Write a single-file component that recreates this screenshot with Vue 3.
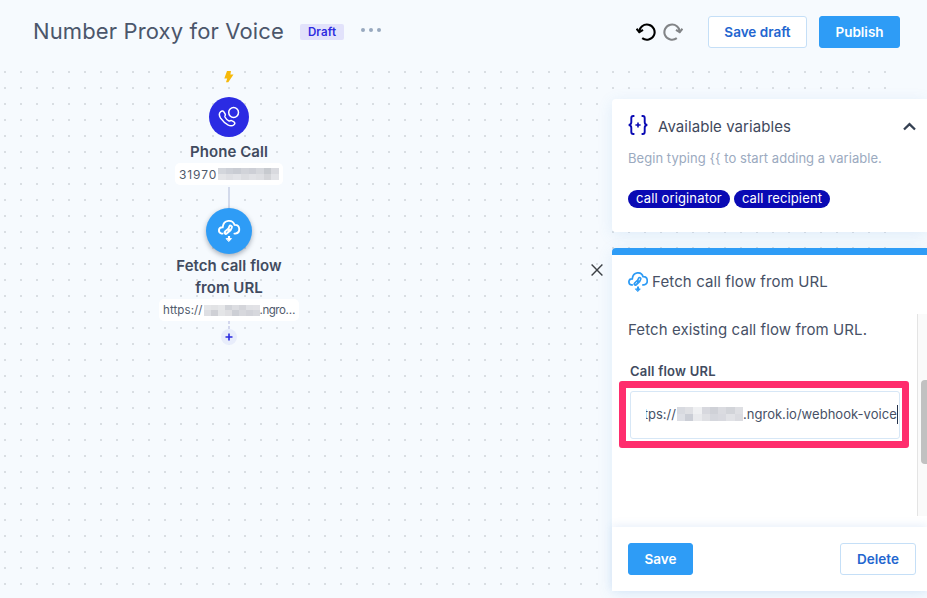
<script setup>
const callDigits = ['#d3d6dc', '#cdd0d7', '#c9ccd3', '#d1d3d9', '#cdcfd6', '#d5d7dc', '#c7cacf', '#d9dadf', '#e4e5e8', '#dfe0e4', '#e3e4e8', '#dcdde1', '#e1e2e6', '#dedfe3', '#d4d5d9', '#e2e3e7']
const hostBlocks = ['#e5e6e8', '#e2e3e5', '#e6e7e9', '#d2d4d9', '#dcdde1', '#d4d5da', '#e0e1e5', '#e2e2e6', '#dedfe3', '#cfd0d5', '#e4e5e7', '#dfdfe2', '#cdcfd5', '#d7d8dd', '#d2d3d9', '#d7d8dd']
const fieldBlocks = ['#d8dae0', '#dfe0e4', '#eff0f2', '#d7d8de', '#cfd1d7', '#dadbe0', '#d2d4d9', '#dedfe3', '#dddfe5', '#cbced6', '#e9eaed', '#dfe0e4', '#d5d7dd', '#d8d9df', '#e1e2e6', '#dadbe0']
const variables = ['call originator', 'call recipient']
</script>

<template>
  <div class="app">
    <header class="topbar">
      <h1 class="title">Number Proxy for Voice</h1>
      <span class="badge">Draft</span>
      <span class="more"><i></i><i></i><i></i></span>
      <div class="history">
        <svg width="20" height="18" viewBox="0 0 20 18" fill="none" stroke="#000" stroke-width="2.1">
          <path d="M3.2 9.2A7.7 7.6 0 1 1 6.2 15.2" /><path d="M.5 5.8l2.8 3.3 3.7-2.3" />
        </svg>
        <svg width="20" height="18" viewBox="0 0 20 18" fill="none" stroke="#828487" stroke-width="2.1">
          <path d="M16.8 9.2A7.7 7.6 0 1 0 13.8 15.2" /><path d="M19.5 5.8l-2.8 3.3-3.7-2.3" />
        </svg>
      </div>
      <button class="btn outline draft">Save draft</button>
      <button class="btn solid publish">Publish</button>
    </header>

    <main class="workspace">
      <section class="flow">
        <svg class="bolt" width="10" height="12" viewBox="0 0 10 12"><path d="M3 .1h4L6.4 3.6h3.1L4.3 11.2H2L3.2 7.4H.3z" fill="#f6b90b" /></svg>
        <div class="node phone">
          <svg width="22" height="22" viewBox="0 0 22 22" fill="none" stroke="#fff" stroke-width="1.5" stroke-linejoin="round">
            <circle cx="15.6" cy="6.5" r="4.9" />
            <path d="M2.6 5.8c1.5-1.4 2.7-.9 3.6.6l1 1.8c.6 1.2-.7 1.8-.2 2.8.9 1.7 2.2 3.1 3.8 3.9 1 .5 1.7-.8 2.8-.3l2 1c1.4.9 1.7 2 .4 3.1-1.4 1.3-3.7 1.5-6.1.2-3.3-1.9-5.4-4.2-7.3-6.8-1.6-2.5-1.6-4.8 0-6.3z" />
          </svg>
        </div>
        <div class="label phone-label">Phone Call</div>
        <div class="chip number"><span class="num">31970</span><span class="mosaic m-call"><i v-for="(c, i) in callDigits" :key="i" :style="{ background: c }"></i></span></div>
        <div class="line"></div>
        <div class="node fetch">
          <svg width="24" height="24" viewBox="0 0 24 24" fill="none" stroke="#fff" stroke-width="1.9" stroke-linecap="round">
            <path d="M5.6 14.6H4.6C.7 13.6 1.1 7.9 5.7 8.2 6.6.2 15.6.2 17.6 5.9c5.6-.3 6.5 7.6.8 8.7h-1" />
            <path d="M13.6 8l-1.2 2.6-3.5 3" stroke-width="4.6" stroke-linejoin="round" /><path d="M13.5 8.1l-.4 1.3M10.3 12.3l-1 .8" stroke="#2e9cf6" stroke-width="1" />
            <path d="M12 17v4" stroke-width="2.2" stroke-linecap="butt" /><path d="M9.5 19.6h5L12 22.3z" fill="#fff" stroke-width="1" stroke-linejoin="round" />
          </svg>
        </div>
        <div class="label fetch-label"><span>Fetch call flow</span><br><span class="from">from URL</span></div>
        <div class="chip url"><span>https://</span><span class="mosaic m-host"><i v-for="(c, i) in hostBlocks" :key="i" :style="{ background: c }"></i></span><span class="domain">.ngro…</span></div>
        <div class="stub"></div>
        <div class="add"><svg width="8" height="8" viewBox="0 0 8 8" stroke="#2b2be0" stroke-width="1.6"><path d="M4 .5v7M.5 4h7" /></svg></div>
      </section>

      <div class="close">
        <svg width="12" height="12" viewBox="0 0 12 12" stroke="#3d4145" stroke-width="1.4"><path d="M.6.6l10.8 10.8M11.4.6L.6 11.4" /></svg>
      </div>

      <aside class="side">
        <section class="card variables">
          <div class="vars-head">
            <svg class="braces" width="20" height="20" viewBox="0 0 20 20" fill="none" stroke="#0a0ab4" stroke-width="1.9">
              <path d="M6.4 1H5.2Q3.3 1 3.3 3v4.3Q3.3 9.5.8 10q2.5.5 2.5 2.7V17q0 2 1.9 2h1.2M13.6 1h1.2q1.9 0 1.9 2v4.3q0 2.2 2.5 2.7-2.5.5-2.5 2.7V17q0 2-1.9 2h-1.2" />
              <path d="M10 7.4v5.2M7.4 10h5.2" stroke-width="1.6" />
            </svg>
            <h2>Available variables</h2>
            <svg class="chev" width="13" height="9" viewBox="0 0 13 9" fill="none" stroke="#354052" stroke-width="2.3"><path d="M1 7.5l5.5-5.4L12 7.5" /></svg>
          </div>
          <p class="hint">Begin typing &#123;&#123; to start adding a variable.</p>
          <div class="tags"><span v-for="v in variables" :key="v" class="tag">{{ v }}</span></div>
        </section>

        <section class="card editor">
          <div class="editor-head">
            <svg width="20" height="20" viewBox="1 1 22 22" fill="none" stroke="#2d9bf5" stroke-width="1.9" stroke-linecap="round">
              <path d="M5.6 15.2H4.6C.9 14.2 1.1 8.2 5.7 8.5 6.6.2 15.6.2 17.6 6.2c5.6-.3 6.3 7.9.8 9h-1" />
              <path d="M13.8 8.4l-1.2 2.6-3.5 3.2" stroke-width="4.4" stroke-linejoin="round" /><path d="M13.7 8.5l-.4 1.3M10.5 12.7l-1 .9" stroke="#fff" stroke-width="1" />
              <path d="M12 17v4" stroke-width="2.2" stroke-linecap="butt" /><path d="M9.5 19.6h5L12 22.3z" fill="#2d9bf5" stroke-width="1" stroke-linejoin="round" />
            </svg>
            <span>Fetch call flow from URL</span>
          </div>
          <div class="scroll">
            <div class="content">
              <p class="desc">Fetch existing call flow from URL.</p>
              <label class="field-label">Call flow URL</label>
              <div class="highlight">
                <div class="input">
                  <span class="clip"><span>t</span></span><span class="proto">ps://</span><span class="mosaic m-field"><i v-for="(c, i) in fieldBlocks" :key="i" :style="{ background: c }"></i></span><span class="path">.ngrok.io/webhook-voice</span><i class="caret"></i>
                </div>
              </div>
            </div>
            <div class="track"><div class="thumb"></div></div>
          </div>
          <footer class="actions">
            <button class="btn solid save">Save</button>
            <button class="btn outline delete">Delete</button>
          </footer>
        </section>
      </aside>
    </main>
  </div>
</template>

<style>
body { background: #f6fafe; }
</style>

<style scoped>
* { box-sizing: border-box; }
.app { position: relative; width: 927px; height: 598px; overflow: hidden; background: #f6fafe; color: #475166; font-family: Inter, "Liberation Sans", sans-serif; }
.app::before { content: ""; position: absolute; left: 4px; top: 71px; width: 884px; height: 527px; background: conic-gradient(from 270deg at 2px 2px, #d9dee3 90deg, transparent 0) 0 0 / 16px 16px; }
h1, h2, p { margin: 0; font-weight: 400; }
.topbar { position: relative; display: flex; align-items: center; height: 64px; padding-right: 27px; padding-left: 33px; }
.title { width: 251px; margin-top: -2px; font-size: 22px; line-height: 30px; letter-spacing: 0.13px; white-space: nowrap; color: #4b566b; }
.badge { width: 44px; height: 16px; margin-left: 16px; border-radius: 2px; background: #e2e2fb; color: #2d2be0; font-size: 11.5px; font-weight: 600; line-height: 17px; letter-spacing: .15px; text-align: center; }
.more { display: flex; gap: 4px; margin: -4px 0 0 17px; }
.more i { width: 4px; height: 4px; border-radius: 50%; background: #98a8bf; }
.history { display: flex; gap: 7px; margin-left: auto; margin-right: 25px; }
.btn { height: 32px; padding: 0; border: 1px solid #2e9cf6; border-radius: 3px; font-family: inherit; font-size: 13.5px; font-weight: 600; line-height: 30px; text-align: center; white-space: nowrap; }
.solid { background: #2e9cf6; color: #fff; }
.outline { border-color: #c5dff7; background: #fff; color: #2366cf; }
.draft { width: 99px; margin-right: 12px; }
.publish { width: 81px; }
.workspace { position: relative; display: flex; height: 534px; }
.flow { display: flex; flex-direction: column; align-items: center; width: 458px; padding-top: 7px; }
.node { display: flex; align-items: center; justify-content: center; border-radius: 50%; flex: none; }
.phone { width: 40px; height: 40px; margin-top: 14px; background: #2b2be3; }
.fetch { width: 46px; height: 46px; background: #2e9cf6; box-shadow: 0 2px 5px rgba(40, 55, 75, .4); }
.label { color: #414b60; font-size: 15px; font-weight: 600; line-height: 22px; letter-spacing: .07px; text-align: center; }
.phone-label { margin-top: 4px; }
.fetch-label { margin-top: 1px; }
.chip { display: flex; align-items: center; height: 22px; border-radius: 5px; background: #fff; color: #505a6c; white-space: nowrap; }
.number { width: 108px; padding-left: 4px; font-size: 12px; letter-spacing: .9px; }
.num { width: 39px; }
.url { width: 140px; padding-left: 4px; font-size: 11.5px; letter-spacing: .1px; }
.domain { letter-spacing: -.45px; }
.mosaic { display: grid; grid-template-columns: repeat(8, 1fr); flex: none; }
.m-call { width: 61px; height: 12px; }
.m-host { width: 56px; height: 11px; margin-left: 1px; }
.line { width: 2px; height: 21px; margin-top: 2px; background: #d3daeb; }
.stub { width: 2px; height: 8px; background: repeating-linear-gradient(#d3d7ed 0 3px, transparent 3px 5px); }
.add { display: flex; align-items: center; justify-content: center; width: 16px; height: 16px; border-radius: 50%; background: #e8edfb; }
.close { display: flex; align-items: flex-start; justify-content: flex-end; width: 145px; margin-top: 200px; }
.side { width: 315px; margin-left: 9px; padding-top: 35px; }
.card { background: #fff; box-shadow: 0 3px 15px rgba(70, 145, 215, .13); }
.variables { height: 133px; padding: 16px 11px 0 16px; border-radius: 4px 0 0 4px; }
.vars-head { display: flex; align-items: center; height: 22px; }
.braces { margin-top: -2px; }
.vars-head h2 { margin: 2px 0 0 10px; color: #3f495d; font-size: 15px; line-height: 20px; letter-spacing: .06px; white-space: nowrap; }
.chev { margin-left: auto; }
.hint { margin-top: 12px; color: #9baac0; font-size: 13px; line-height: 18px; letter-spacing: .05px; white-space: nowrap; }
.tags { display: flex; gap: 4px; margin-top: 23px; }
.tag { height: 18px; padding: 0 8px; border-radius: 9px; background: #0a0ab4; color: #fff; font-size: 13px; line-height: 17px; letter-spacing: .14px; white-space: nowrap; }
.editor { height: 343px; margin-top: 16px; border-top: 7px solid #2e9cf6; border-radius: 4px 0 0 0; }
.editor-head { display: flex; align-items: center; gap: 4px; height: 59px; padding: 0 0 5px 16px; font-size: 15px; letter-spacing: .12px; white-space: nowrap; }
.editor-head span { margin-top: -2px; }
.scroll { display: flex; height: 202px; }
.content { width: 305px; }
.desc { padding: 5px 0 0 16px; font-size: 15px; line-height: 22px; letter-spacing: .08px; white-space: nowrap; }
.field-label { display: block; margin: 20px 0 0 18px; color: #414b60; font-size: 13px; font-weight: 600; line-height: 20px; letter-spacing: .22px; }
.highlight { width: 290px; height: 67px; margin-left: 7px; border: 7px solid #ff2d6d; border-radius: 3px; padding: 3px 3px 2px 4px; }
.input { display: flex; align-items: center; width: 270px; height: 48px; padding: 0 0 2px 15px; border: 1px solid #d7e7f6; border-radius: 3px; font-size: 13px; white-space: nowrap; overflow: hidden; }
.clip { display: flex; justify-content: flex-end; width: 2px; overflow: hidden; }
.m-field { width: 66px; height: 14px; margin: 0 0 0 1px; }
.path { letter-spacing: .03px; }
.caret { width: 1px; height: 19px; background: #26334a; }
.track { width: 10px; padding: 66px 0 0 3px; border-left: 1px solid #e4e4e4; background: #fafafa; }
.thumb { width: 6px; height: 84px; border-radius: 4px 0 0 4px; background: #c1c1c1; }
.actions { display: flex; align-items: center; justify-content: space-between; height: 64px; margin-top: 11px; padding: 0 11px 0 16px; box-shadow: 0 -2px 8px rgba(70, 130, 215, .12); }
.save { width: 65px; }
.delete { width: 76px; }
</style>
